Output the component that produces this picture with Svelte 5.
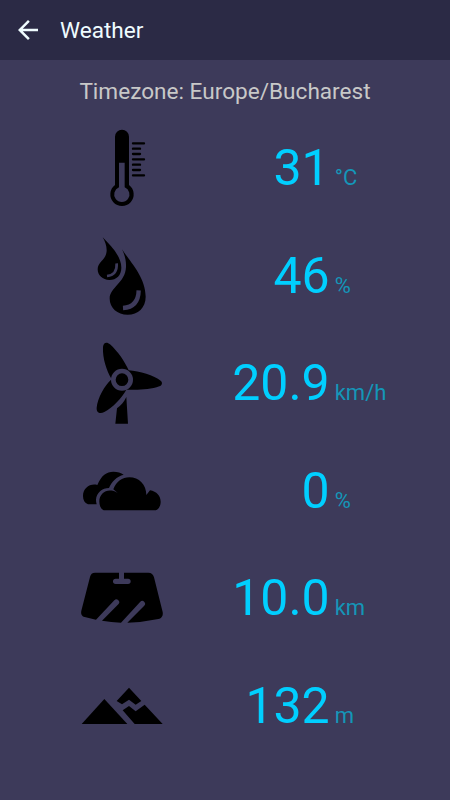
<script>
  const timezone = 'Europe/Bucharest';

  const readings = [
    { icon: 'temperature', value: '31', unit: '°C' },
    { icon: 'humidity', value: '46', unit: '%' },
    { icon: 'wind', value: '20.9', unit: 'km/h' },
    { icon: 'clouds', value: '0', unit: '%' },
    { icon: 'visibility', value: '10.0', unit: 'km' },
    { icon: 'altitude', value: '132', unit: 'm' }
  ];

  // Each icon is drawn on a 300 unit square, shifted to sit centred in its row
  const offsets = {
    temperature: -5,
    humidity: -10,
    wind: -2,
    clouds: -31,
    visibility: -35,
    altitude: -46
  };
</script>

<div class="screen">
  <header>
    <button class="back" aria-label="Back">
      <svg viewBox="0 0 24 24" width="30" height="30">
        <path d="M20 11H7.83l5.59-5.59L12 4l-8 8 8 8 1.41-1.41L7.83 13H20v-2z" />
      </svg>
    </button>
    <h1>Weather</h1>
  </header>

  <p class="timezone">Timezone: {timezone}</p>

  <div class="readings">
    {#each readings as reading}
      <div class="row">
        <svg class="icon" viewBox="0 {offsets[reading.icon]} 300 300">
          {#if reading.icon === 'temperature'}
            <path fill-rule="evenodd" d="M135 51a21 21 0 0 1 42 0V196a35 35 0 1 1-42 0ZM147 129V203a23 23 0 1 0 17 0V129Z" />
            <path class="tick" d="M189 71h33M189 87h21M189 103h21M189 119h33M189 135h21M189 151h21M189 167h33" />
          {:else if reading.icon === 'humidity'}
            <path d="M98 27C122 52 154 83 154 118C154 140 140 155 118 155C98 155 83 141 83 123C83 100 110 94 110 66C110 51 105 39 98 27Z" />
            <path d="M156 63C178 98 227 145 227 205C227 238 204 259 173 259C142 259 119 238 119 211C119 177 166 164 168 116C169 97 164 79 156 63Z" />
            <path class="cut" stroke-width="8" d="M140 105Q142 140 111 143" />
            <path class="cut" stroke-width="13" d="M206 186Q205 236 159 239" />
          {:else if reading.icon === 'wind'}
            <path d="M123 133C111 113 97 75 99 40C100 27 110 23 120 32C144 54 164 83 176 110C208 112 253 126 272 141C279 147 276 155 268 158C240 169 202 169 169 168C155 194 127 222 103 235C89 243 79 236 80 222C83 192 104 156 123 138Z" />
            <circle class="hub" cx="156" cy="138" r="26" />
            <path d="M169 190L174 270H136L141 224C153 215 162 205 169 190Z" />
          {:else if reading.icon === 'clouds'}
            <path d="M82 104C94 75 110 64 130 64Q149 64 161 73C140 79 125 93 117 113C97 113 79 127 78 148Q78 155 80 162H54C44 158 39 149 39 137C39 113 61 98 82 104Z" />
            <path d="M101 180C92 176 88 165 88 153C88 128 113 112 138 125L143 128L130 117C139 93 157 81 178 81C207 81 229 103 229 134L240 120C260 123 272 137 272 154C272 167 265 180 254 180Z" />
          {:else if reading.icon === 'visibility'}
            <path d="M75 39H147V57H137A7.500 7.500 0 0 0 137 73H174A8 8 0 0 0 174 57H162V39H235C244 39 250 44 252 53L278 157C280 168 275 176 265 178Q217 188 172 189L222 139A8 8 0 0 0 211 126L153 189Q123 188 96 183L145 134A8 8 0 0 0 133 122L78 180L44 172C35 170 32 162 34 153L60 52C62 43 67 39 75 39Z" />
          {:else}
            <path d="M35 161L103 86L172 161Z" />
            <path d="M140 92L177 52L214 92L197 103L177 88L156 102Z" />
            <path d="M158 120L177 107L197 123L224 103L278 161H194Z" />
          {/if}
        </svg>
        <span class="value">{reading.value}</span>
        <span class="unit">{reading.unit}</span>
      </div>
    {/each}
  </div>
</div>

<style>
  :global(body) {
    margin: 0;
    background: #3d3a5a;
  }

  .screen {
    height: 800px;
    overflow: hidden;
    background: #3d3a5a;
    font-family: Roboto, sans-serif;
  }

  header {
    display: flex;
    align-items: center;
    height: 60px;
    background: #2b2a45;
  }

  .back {
    display: flex;
    margin: 0 17px 0 13px;
    padding: 0;
    border: 0;
    background: none;
  }

  .back path {
    fill: #f0fcff;
  }

  h1 {
    margin: 0;
    padding-top: 2px;
    font-size: 22.6px;
    font-weight: 400;
    line-height: 30px;
    color: #f0fcff;
  }

  .timezone {
    height: 54.2px;
    margin: 0;
    font-size: 22.6px;
    line-height: 63px;
    text-align: center;
    color: #c8c8c8;
  }

  .row {
    display: grid;
    grid-template-columns: 100px 1fr 115.3px;
    grid-template-rows: 107.5px;
    column-gap: 5px;
    align-items: baseline;
    height: 107.5px;
    padding-left: 70px;
  }

  .icon {
    align-self: center;
    width: 100px;
    height: 100px;
  }

  .tick {
    fill: none;
    stroke: #000;
    stroke-width: 7;
    stroke-linecap: round;
  }

  .cut {
    fill: none;
    stroke: #3d3a5a;
  }

  .hub {
    stroke: #3d3a5a;
    stroke-width: 14;
  }

  .value {
    font-size: 50px;
    line-height: 108px;
    text-align: right;
    color: #00cfff;
  }

  .unit {
    font-size: 22px;
    color: #1496b8;
  }
</style>
